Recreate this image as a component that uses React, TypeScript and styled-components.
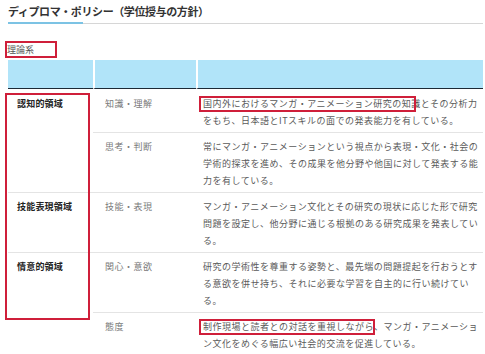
import styled, { createGlobalStyle } from 'styled-components'

const GlobalStyle = createGlobalStyle`
  body {
    margin: 0;
    background: #fff;
    font-family: "Noto Sans CJK JP", "Noto Sans", sans-serif;
  }
`

const Page = styled.div`
  padding: 0 2px 0 8px;
  width: 475px;
`

const Title = styled.h2`
  position: relative;
  margin: 0;
  padding: 3px 0 4px;
  font-size: 11px;
  line-height: 16px;
  font-weight: 700;
  color: #333;
  letter-spacing: -0.4px;
  border-bottom: 1px solid #d6d6d6;

  &::after {
    content: '';
    position: absolute;
    left: 0;
    bottom: -1px;
    width: 75px;
    height: 2px;
    background: #7cc3e4;
  }
`

const Label = styled.div`
  box-sizing: border-box;
  width: 52px;
  height: 17px;
  margin: 17px 0 2px -3px;
  padding-left: 0;
  border: 2px solid #cf1f3a;
  font-size: 9px;
  line-height: 13px;
  color: #555;
`

const TableWrap = styled.div`
  position: relative;
`

const Table = styled.table`
  width: 475px;
  table-layout: fixed;
  border-collapse: separate;
  border-spacing: 0;
  font-size: 9px;
  letter-spacing: 0.5px;
  line-height: 17px;
`

const Head = styled.th<{ $w: number }>`
  box-sizing: border-box;
  width: ${p => p.$w}px;
  height: 29px;
  padding: 0;
  background: #b1e4f9;
  border-bottom: 1px solid #1d2a36;

  & + & {
    border-left: 2px solid #fff;
  }
`

const Cell = styled.td<{ $first?: boolean }>`
  vertical-align: top;
  padding: 5px 6px 3px;
  border-top: 1px solid ${p => (p.$first ? 'transparent' : '#e4e4e4')};
`

const AreaCell = styled(Cell)`
  padding-left: 9px;
  font-weight: 700;
  color: #222;
  letter-spacing: 0.2px;
`

const ItemCell = styled(Cell)`
  padding-left: 12px;
  color: #7a7a7a;
`

const TextCell = styled(Cell)`
  padding-left: 7px;
  padding-right: 0;
  color: #5a5a5a;
`

// red hand-drawn highlight boxes over parts of the text
const Mark = styled.span<{ $right: number }>`
  position: relative;

  &::after {
    content: '';
    position: absolute;
    left: -4px;
    right: ${p => p.$right}px;
    top: -1px;
    bottom: -2px;
    border: 2px solid #cf1f3a;
    pointer-events: none;
  }
`

const AreaFrame = styled.div`
  position: absolute;
  left: -3px;
  top: 33px;
  width: 85px;
  height: 227px;
  box-sizing: border-box;
  border: 2px solid #cf1f3a;
  pointer-events: none;
`

type Row = {
  area?: string
  span?: number
  item: string
  text: React.ReactNode
}

const rows: Row[] = [
  {
    area: '認知的領域',
    span: 2,
    item: '知識・理解',
    text: (
      <>
        <Mark $right={5}>国内外におけるマンガ・アニメーション研究の知識</Mark>
        とその分析力をもち、日本語とITスキルの面での発表能力を有している。
      </>
    ),
  },
  {
    item: '思考・判断',
    text: '常にマンガ・アニメーションという視点から表現・文化・社会の学術的探求を進め、その成果を他分野や他国に対して発表する能力を有している。',
  },
  {
    area: '技能表現領域',
    item: '技能・表現',
    text: 'マンガ・アニメーション文化とその研究の現状に応じた形で研究問題を設定し、他分野に通じる根拠のある研究成果を発表している。',
  },
  {
    area: '情意的領域',
    span: 2,
    item: '関心・意欲',
    text: '研究の学術性を尊重する姿勢と、最先端の問題提起を行おうとする意欲を併せ持ち、それに必要な学習を自主的に行い続けている。',
  },
  {
    item: '態度',
    text: (
      <>
        <Mark $right={8}>制作現場と読者との対話を重視しながら、</Mark>
        マンガ・アニメーション文化をめぐる幅広い社会的交流を促進している。
      </>
    ),
  },
]

export default function App() {
  return (
    <>
      <GlobalStyle />
      <Page>
        <Title>ディプロマ・ポリシー（学位授与の方針）</Title>
        <Label>理論系</Label>
        <TableWrap>
          <Table>
            <thead>
              <tr>
                <Head $w={85} />
                <Head $w={103} />
                <Head $w={287} />
              </tr>
            </thead>
            <tbody>
              {rows.map((r, i) => (
                <tr key={i}>
                  {r.area && (
                    <AreaCell rowSpan={r.span ?? 1} $first={i === 0}>
                      {r.area}
                    </AreaCell>
                  )}
                  <ItemCell $first={i === 0}>{r.item}</ItemCell>
                  <TextCell $first={i === 0}>{r.text}</TextCell>
                </tr>
              ))}
            </tbody>
          </Table>
          <AreaFrame />
        </TableWrap>
      </Page>
    </>
  )
}
